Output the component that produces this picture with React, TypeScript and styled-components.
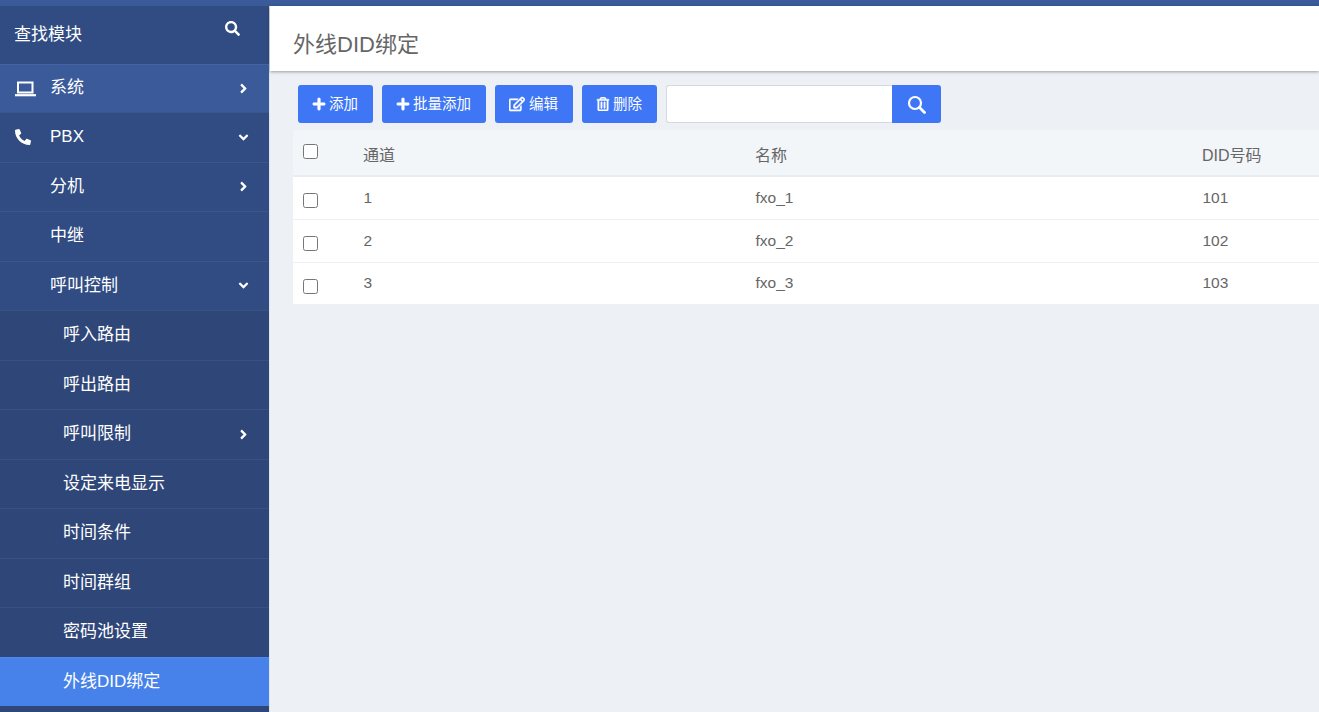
import { createGlobalStyle, styled } from "styled-components";
import { FaAngleDown, FaAngleRight, FaPhone, FaPlus, FaRegEdit, FaRegTrashAlt, FaSearch } from "react-icons/fa";

const GlobalStyle = createGlobalStyle`
  html, body {
    margin: 0;
    height: 100%;
    overflow: hidden;
    background: #edf1f5;
    font-family: "Liberation Sans", "Noto Sans CJK SC", sans-serif;
  }
  * { box-sizing: border-box; }
`;

const Page = styled.div`
  height: 712px;
  display: flex;
  flex-direction: column;
  overflow: hidden;
`;

const TopStrip = styled.div`
  height: 6px;
  flex-shrink: 0;
  background: #3a5a9a;
`;

const Body = styled.div`
  flex: 1;
  display: flex;
  min-height: 0;
`;

const Sidebar = styled.nav`
  width: 270px;
  flex-shrink: 0;
  background: #2f4679;
  color: #fff;
  font-size: 17px;
  border-right: 1px solid #dfe4ea;
`;

const SearchRow = styled.div`
  height: 58px;
  display: flex;
  align-items: center;
  justify-content: space-between;
  padding: 0 29px 6px 14px;
  background: #304c82;
  svg { font-size: 15px; margin-top: -8px; }
`;

const MenuRow = styled.div<{ $level?: number; $state?: "hover" | "active"; $first?: boolean }>`
  height: ${({ $first }) => ($first ? 48 : 49.5)}px;
  display: flex;
  align-items: center;
  padding-left: ${({ $level = 0 }) => ($level === 2 ? 63 : 50)}px;
  padding-right: 18px;
  position: relative;
  border-top: 1px solid rgba(255, 255, 255, 0.06);
  background: ${({ $level = 0, $state }) =>
    $state === "hover" ? "#3a5a9a" : $state === "active" ? "#4682ea" : $level === 2 ? "#2f4679" : "#304c82"};
`;

const Label = styled.span<{ $lift?: number }>`
  padding-bottom: ${({ $lift = 5 }) => $lift}px;
`;

const RowIcon = styled.span`
  position: absolute;
  left: 15px;
  top: 0;
  bottom: 0;
  display: flex;
  align-items: center;
`;

const PhoneIcon = styled(FaPhone)`
  font-size: 16px;
  transform: scaleX(-1);
`;

const Caret = styled.span`
  margin-left: auto;
  display: flex;
  font-size: 15px;
`;

const Main = styled.main`
  flex: 1;
  min-width: 0;
  display: flex;
  flex-direction: column;
`;

const TitleBar = styled.header`
  height: 65px;
  flex-shrink: 0;
  display: flex;
  align-items: center;
  padding: 6px 0 0 23px;
  background: #fff;
  box-shadow: 0 1px 3px rgba(0, 0, 0, 0.35);
  color: #666;
  font-size: 22px;
`;

const Content = styled.div`
  padding: 14px 0 0 23px;
`;

const Toolbar = styled.div`
  height: 38px;
  padding-left: 5px;
  display: flex;
  gap: 9px;
  margin-bottom: 7px;
`;

const ToolButton = styled.button<{ $iconSize?: number; $gap?: number }>`
  height: 38px;
  padding: 0 15px 0 14px;
  display: flex;
  align-items: center;
  gap: ${({ $gap = 3 }) => $gap}px;
  border: none;
  border-radius: 3px;
  background: #3e76f6;
  color: #fff;
  font-family: inherit;
  font-size: 14.5px;
  span { padding-bottom: 4px; }
  svg {
    font-size: ${({ $iconSize = 14 }) => $iconSize}px;
    stroke: currentColor;
    stroke-width: 18px;
  }
`;

const SearchGroup = styled.div`
  display: flex;
  height: 38px;
`;

const SearchInput = styled.input`
  width: 226px;
  height: 38px;
  border: 1px solid #d3d9e0;
  border-right: none;
  border-radius: 3px 0 0 3px;
  background: #fff;
  outline: none;
`;

const SearchButton = styled.button`
  width: 49px;
  height: 38px;
  padding: 0;
  display: flex;
  align-items: center;
  justify-content: center;
  border: none;
  border-radius: 0 3px 3px 0;
  background: #3e76f6;
  color: #fff;
`;

const Table = styled.div`
  color: #666;
  font-size: 15.5px;
`;

const TableRow = styled.div<{ $head?: boolean; $height: number }>`
  height: ${({ $height }) => $height}px;
  display: grid;
  grid-template-columns: 60px 392px 447px 1fr;
  align-items: center;
  background: ${({ $head }) => ($head ? "#f3f6f9" : "#fff")};
  border-bottom: ${({ $head }) => ($head ? "2px solid #e9edf1" : "1px solid #eef1f4")};
`;

const CheckCell = styled.div`
  padding-left: 10px;
`;

const Cell = styled.div`
  padding-left: 10.5px;
  padding-bottom: 1px;
`;

const HeadCell = styled.div`
  padding-left: 10px;
  padding-top: 2px;
  font-size: 16px;
`;

const Check = styled.input.attrs({ type: "checkbox" })<{ $up?: boolean }>`
  display: block;
  width: 15px;
  height: 15px;
  margin: ${({ $up }) => ($up ? "-2px" : "5px")} 0 0 0;
  accent-color: #3e76f6;
`;

const LaptopIcon = () => (
  <svg width="21" height="16" viewBox="0 0 21 16" fill="none" stroke="#fff">
    <rect x="3" y="1.5" width="14.5" height="10" strokeWidth="2" />
    <path d="M0 14.2h21" strokeWidth="2.2" />
  </svg>
);

const ThinSearchIcon = () => (
  <svg width="19" height="19" viewBox="0 0 19 19" fill="none" stroke="#fff" strokeWidth="2.2" strokeLinecap="round">
    <circle cx="8" cy="8" r="6" />
    <path d="M12.5 12.5l5 5" strokeWidth="2.8" />
  </svg>
);

const rows = [
  { channel: "1", name: "fxo_1", did: "101" },
  { channel: "2", name: "fxo_2", did: "102" },
  { channel: "3", name: "fxo_3", did: "103" },
];

export default function App() {
  return (
    <Page>
      <GlobalStyle />
      <TopStrip />
      <Body>
        <Sidebar>
          <SearchRow>
            <span>查找模块</span>
            <FaSearch />
          </SearchRow>
          <MenuRow $state="hover" $first>
            <RowIcon><LaptopIcon /></RowIcon>
            <Label $lift={7}>系统</Label>
            <Caret><FaAngleRight /></Caret>
          </MenuRow>
          <MenuRow>
            <RowIcon><PhoneIcon /></RowIcon>
            PBX
            <Caret><FaAngleDown /></Caret>
          </MenuRow>
          <MenuRow><Label>分机</Label><Caret><FaAngleRight /></Caret></MenuRow>
          <MenuRow><Label>中继</Label></MenuRow>
          <MenuRow><Label>呼叫控制</Label><Caret><FaAngleDown /></Caret></MenuRow>
          <MenuRow $level={2}><Label>呼入路由</Label></MenuRow>
          <MenuRow $level={2}><Label>呼出路由</Label></MenuRow>
          <MenuRow $level={2}><Label>呼叫限制</Label><Caret><FaAngleRight /></Caret></MenuRow>
          <MenuRow $level={2}><Label>设定来电显示</Label></MenuRow>
          <MenuRow $level={2}><Label>时间条件</Label></MenuRow>
          <MenuRow $level={2}><Label>时间群组</Label></MenuRow>
          <MenuRow $level={2}><Label>密码池设置</Label></MenuRow>
          <MenuRow $level={2} $state="active"><Label>外线DID绑定</Label></MenuRow>
        </Sidebar>
        <Main>
          <TitleBar>外线DID绑定</TitleBar>
          <Content>
            <Toolbar>
              <ToolButton><FaPlus /><span>添加</span></ToolButton>
              <ToolButton><FaPlus /><span>批量添加</span></ToolButton>
              <ToolButton $iconSize={16} $gap={4}><FaRegEdit /><span>编辑</span></ToolButton>
              <ToolButton><FaRegTrashAlt /><span>删除</span></ToolButton>
              <SearchGroup>
                <SearchInput />
                <SearchButton><ThinSearchIcon /></SearchButton>
              </SearchGroup>
            </Toolbar>
            <Table>
              <TableRow $head $height={47}>
                <CheckCell><Check $up /></CheckCell>
                <HeadCell>通道</HeadCell>
                <HeadCell>名称</HeadCell>
                <HeadCell>DID号码</HeadCell>
              </TableRow>
              {rows.map((row) => (
                <TableRow key={row.channel} $height={row.channel === "3" ? 42 : 43}>
                  <CheckCell><Check /></CheckCell>
                  <Cell>{row.channel}</Cell>
                  <Cell>{row.name}</Cell>
                  <Cell>{row.did}</Cell>
                </TableRow>
              ))}
            </Table>
          </Content>
        </Main>
      </Body>
    </Page>
  );
}
